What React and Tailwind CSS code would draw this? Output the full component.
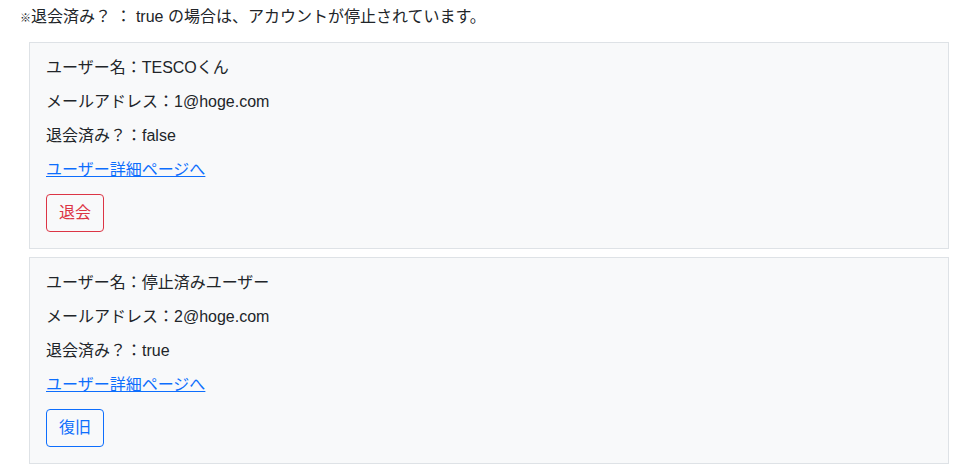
const users = [
  { name: "TESCOくん", email: "1@hoge.com", deleted: false },
  { name: "停止済みユーザー", email: "2@hoge.com", deleted: true },
];

const UserCard = ({ user }) => {
  return (
    <div className="bg-[#f8f9fa] border border-[#dee2e6] pt-[13px] px-4 pb-4 mb-[8px]">
      <p className="leading-6 mb-[10px]">ユーザー名：{user.name}</p>
      <p className="leading-6 mb-[10px]">メールアドレス：{user.email}</p>
      <p className="leading-6 mb-[10px]">退会済み？：{user.deleted ? "true" : "false"}</p>
      <p className="leading-6 mb-[12px]">
        <a href="#" className="text-[#0d6efd] underline">ユーザー詳細ページへ</a>
      </p>
      {user.deleted ? (
        <button className="border border-[#0d6efd] text-[#0d6efd] rounded-[4px] px-3 py-[6px] leading-6 bg-transparent">
          復旧
        </button>
      ) : (
        <button className="border border-[#dc3545] text-[#dc3545] rounded-[4px] px-3 py-[6px] leading-6 bg-transparent">
          退会
        </button>
      )}
    </div>
  );
};

export default function App() {
  return (
    <div
      className="bg-white min-h-screen text-[16px] text-[#212529]"
      style={{ fontFamily: '"Liberation Sans", "Noto Sans CJK JP", sans-serif' }}
    >
      <p className="pl-5 pt-[5px] leading-6 mb-3">
        <span className="text-[11px]">※</span>退会済み？ ： true の場合は、アカウントが停止されています。
      </p>
      <div className="ml-[29px] w-[920px]">
        {users.map((u) => (
          <UserCard key={u.email} user={u} />
        ))}
      </div>
    </div>
  );
}
